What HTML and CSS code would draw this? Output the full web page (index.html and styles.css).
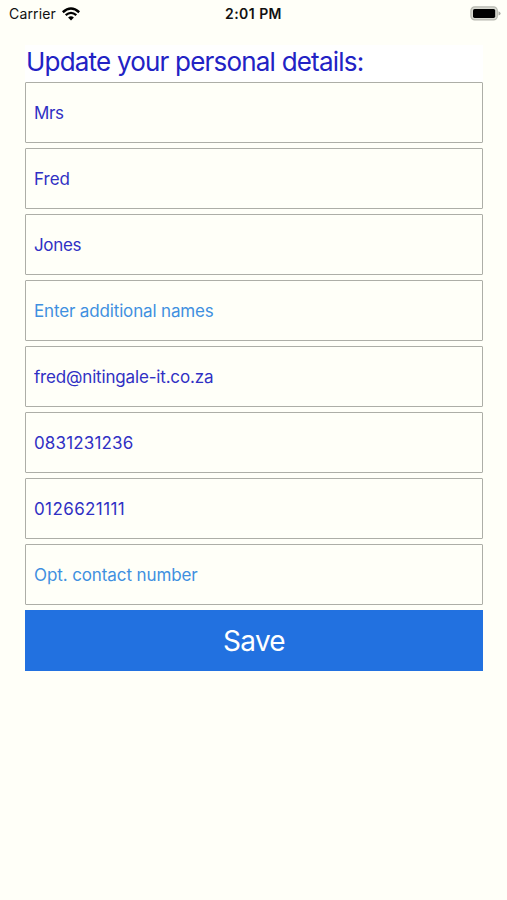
FILE: index.html
```html
<!DOCTYPE html>
<html lang="en">
<head>
  <meta charset="utf-8">
  <title>Personal details</title>
  <link rel="stylesheet" href="styles.css">
</head>
<body>
  <!-- Status bar -->
  <div class="status-bar">
    <div class="carrier">
      <span>Carrier</span>
      <svg class="wifi" width="18" height="14" viewBox="0 0 18 14">
        <path d="M0.8 5.2 Q9 -2.2 17.2 5.2" fill="none" stroke="#000" stroke-width="2.5"/>
        <path d="M3.7 8.2 Q9 3.5 14.3 8.2" fill="none" stroke="#000" stroke-width="2.3"/>
        <path d="M6.1 10.5 Q9 8 11.9 10.5 L9 13.4 Z" fill="#000"/>
      </svg>
    </div>
    <div class="time">2:01 PM</div>
    <svg class="battery" width="31" height="15" viewBox="0 0 31 15">
      <rect x="0.9" y="0.9" width="26.4" height="13" rx="3.8" fill="#d8d9d1" stroke="#b7b8b0" stroke-width="1.2"/>
      <rect x="3" y="2.9" width="22.2" height="9" rx="1.6" fill="#000"/>
      <path d="M28.5 5.3 Q30.6 6 30.6 7.4 Q30.6 8.8 28.5 9.5 Z" fill="#a9aaa3"/>
    </svg>
  </div>

  <form class="container">
    <h1>Update your personal details:</h1>
    <input type="text" class="short" value="Mrs">
    <input type="text" value="Fred">
    <input type="text" class="short" value="Jones">
    <input type="text" class="names" placeholder="Enter additional names">
    <input type="text" class="email" value="fred@nitingale-it.co.za">
    <input type="text" class="phone" value="0831231236">
    <input type="text" class="alt-phone" value="0126621111">
    <input type="text" class="contact" placeholder="Opt. contact number">
    <button type="button">Save</button>
  </form>
</body>
</html>
```
FILE: styles.css
```css
body {
    margin: 0;
    height: 900px;
    overflow: hidden;
    font-family: Inter, "Liberation Sans", sans-serif;
    background-color: #fffff8;
}

.status-bar {
    display: grid;
    grid-template-columns: 1fr auto 1fr;
    align-items: center;
    box-sizing: border-box;
    height: 27px;
    padding: 0 6px 0 9px;
    color: #111;
    font-size: 14px;
}

.carrier {
    display: flex;
    align-items: center;
    gap: 6px;
    letter-spacing: 0.15px;
}

.time {
    margin-right: 3px;
    font-weight: 600;
    letter-spacing: 0.45px;
}

.battery {
    justify-self: end;
}

.container {
    display: flex;
    flex-direction: column;
    gap: 5px;
    margin: 18px 24px 0 25px;
}

h1 {
    height: 37px;
    margin: 0 0 -5px;
    padding-left: 1px;
    line-height: 34px;
    white-space: nowrap;
    font-size: 26px;
    font-weight: 400;
    letter-spacing: -0.8px;
    color: #2222c4;
    background-color: #fff;
}

input {
    box-sizing: border-box;
    width: 100%;
    height: 61px;
    padding: 0 8px;
    border: 1.5px solid #adaea7;
    border-radius: 1px;
    outline: none;
    background-color: transparent;
    color: #3030c4;
    font-family: inherit;
    font-size: 17px;
}

input::placeholder {
    color: #3f90e0;
    opacity: 1;
}

.short {
    letter-spacing: -0.35px;
}

.names {
    letter-spacing: -0.15px;
}

.email {
    letter-spacing: -0.17px;
}

.phone {
    letter-spacing: 0.15px;
}

.alt-phone {
    letter-spacing: 0.4px;
}

.contact {
    letter-spacing: -0.1px;
}

button {
    height: 61px;
    padding: 0;
    border: none;
    background-color: #2271e0;
    color: #fff;
    font-family: inherit;
    font-size: 28px;
    letter-spacing: -0.7px;
}
```
